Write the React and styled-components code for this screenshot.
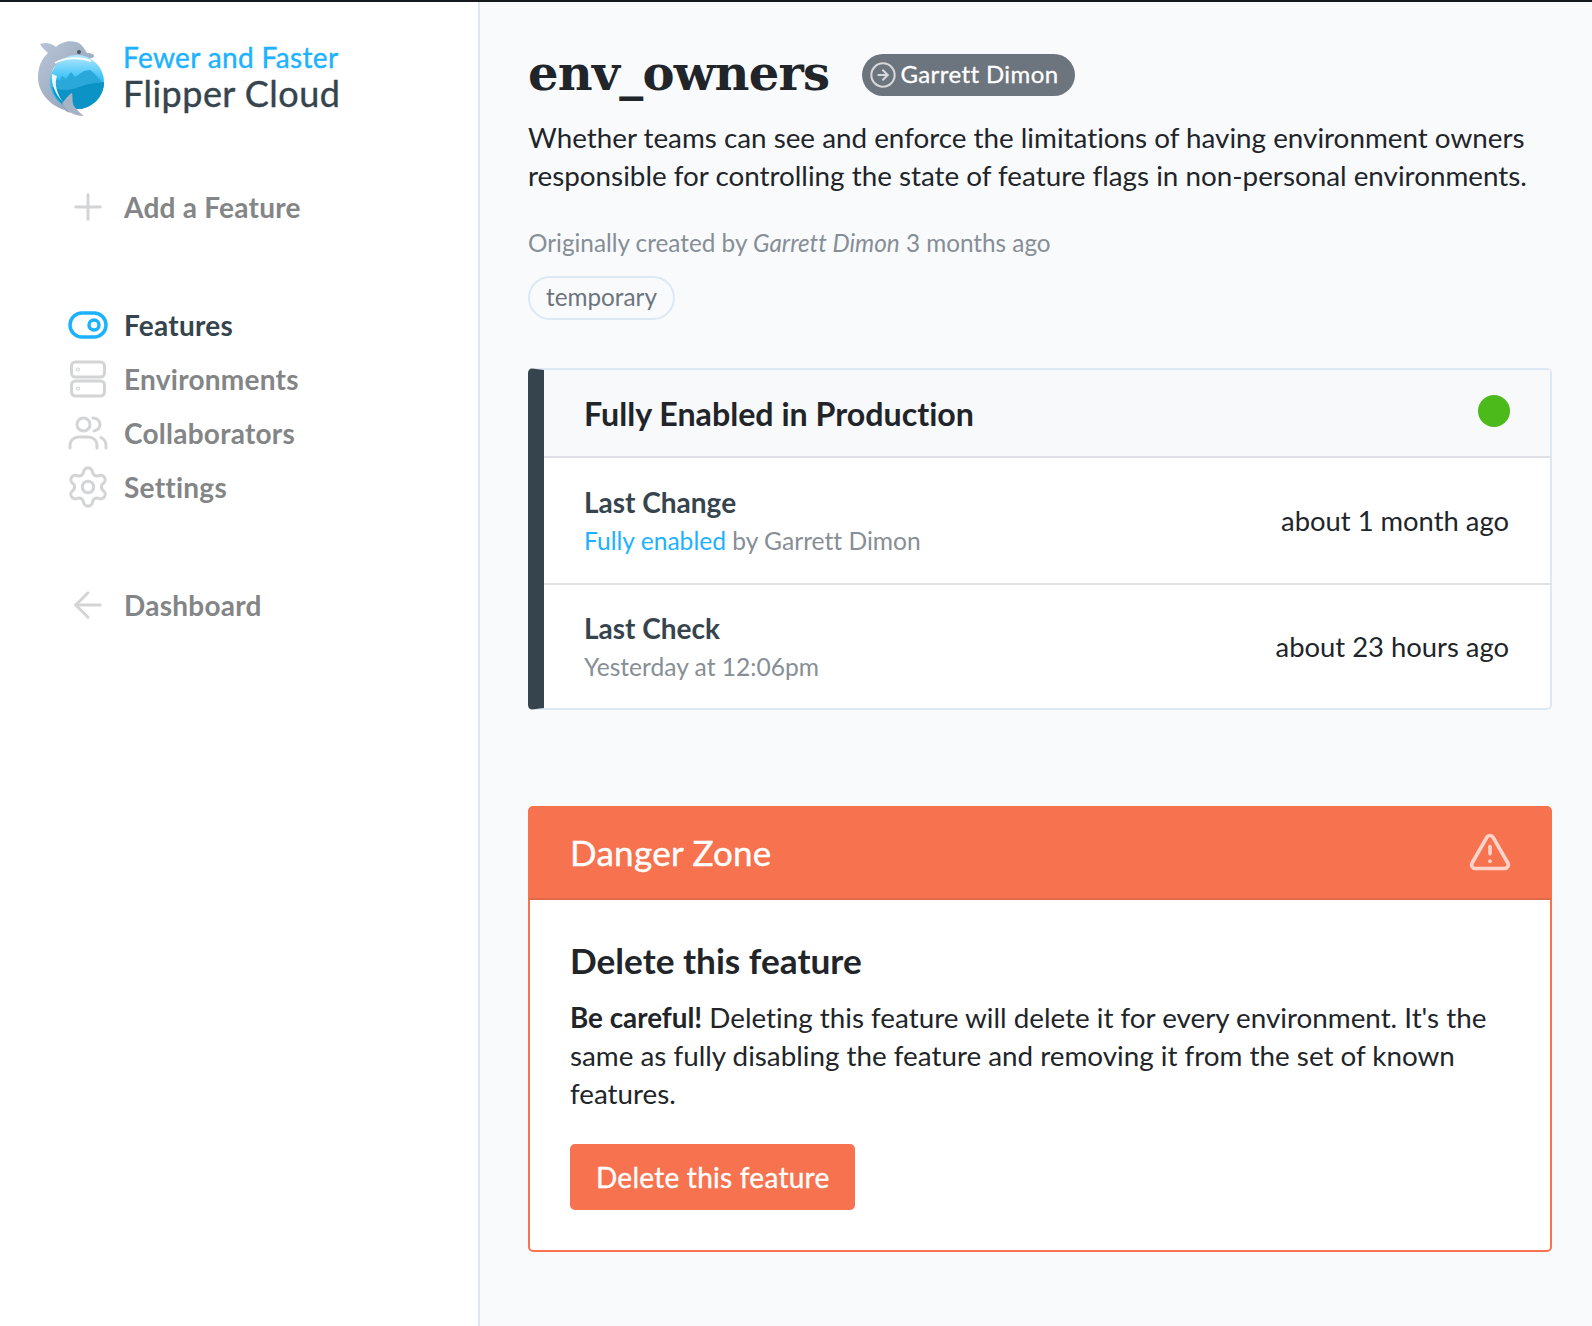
import { createGlobalStyle, styled } from 'styled-components';
import { Plus, Settings, ArrowLeft, ArrowRightCircle, AlertTriangle } from 'lucide-react';

const GlobalStyle = createGlobalStyle`
  html, body { margin: 0; padding: 0; background: #f9fafc; }
  body {
    font-family: Lato, "Liberation Sans", sans-serif;
    font-variant-ligatures: none;
    color: #212529;
  }
  * { box-sizing: border-box; }
`;

const Page = styled.div`
  display: flex;
  height: 1326px;
  overflow: hidden;
  border-top: 2px solid #15191c;
`;

const Sidebar = styled.aside`
  width: 480px;
  flex: none;
  background: #fff;
  border-right: 2px solid #dce8f3;
  padding: 38px 0 0 38px;
`;

const Brand = styled.div`
  display: flex;
  align-items: center;
  gap: 17px;
`;

const BrandText = styled.div`
  display: flex;
  flex-direction: column;
  margin-top: -6px;
  -webkit-text-stroke: 0.4px currentColor;
`;

const Tagline = styled.span`
  color: #1db2ff;
  font-size: 28px;
  line-height: 34px;
  letter-spacing: 0.35px;
`;

const Product = styled.span`
  color: #36444d;
  font-size: 36px;
  line-height: 38px;
  letter-spacing: 0.47px;
`;

const NavGroup = styled.nav`
  display: flex;
  flex-direction: column;
  padding-left: 30px;
  margin-top: ${(p) => p.$top}px;
`;

const NavItem = styled.a`
  display: flex;
  align-items: center;
  gap: 16px;
  height: 54px;
  font-size: 28px;
  font-weight: 700;
  letter-spacing: 0.25px;
  color: ${(p) => (p.$active ? '#36444d' : '#838587')};
`;

const NavIcon = styled.span`
  display: flex;
  width: 40px;
  height: 40px;
  align-items: center;
  justify-content: center;
  color: #d3d4d5;
  svg { flex: none; }
`;

const Main = styled.main`
  flex: 1;
  padding: 39px 40px 0 48px;
`;

const TitleRow = styled.div`
  display: flex;
  align-items: center;
  gap: 33px;
`;

const Title = styled.h1`
  margin: 0;
  font-family: "DejaVu Serif", serif;
  font-size: 48px;
  line-height: 64px;
  font-weight: 700;
  letter-spacing: -0.7px;
  color: #212529;
`;

const OwnerBadge = styled.span`
  display: inline-flex;
  align-items: center;
  gap: 3px;
  height: 42px;
  margin-top: 4px;
  padding: 0 17px 3px 7px;
  border-radius: 21px;
  background: #6c757d;
  color: #fff;
  font-size: 24px;
  letter-spacing: 0.4px;
  -webkit-text-stroke: 0.3px currentColor;
  svg { color: #d6d8da; margin-top: 3px; }
`;

const Description = styled.p`
  margin: 14px 0 0;
  font-size: 27.8px;
  line-height: 38px;
  white-space: nowrap;
`;

const Meta = styled.p`
  margin: 29px 0 0;
  font-size: 24.3px;
  line-height: 38px;
  color: #868e96;
`;

const Tag = styled.span`
  display: inline-flex;
  align-items: center;
  height: 44px;
  margin-top: 14px;
  padding: 0 16px 3px;
  border: 2px solid #dce8f3;
  border-radius: 22px;
  font-size: 24.3px;
  color: #6c757d;
`;

const StatusCard = styled.section`
  margin-top: 48px;
  background: #fff;
  border: 2px solid #dce8f3;
  border-left: 16px solid #36444d;
  border-radius: 5px;
`;

const StatusHeader = styled.div`
  display: flex;
  align-items: center;
  justify-content: space-between;
  height: 88px;
  padding: 0 40px;
  background: #f8f9fb;
  border-bottom: 2px solid #dfe1e4;
`;

const StatusTitle = styled.h2`
  margin: 0;
  font-size: 32.2px;
  font-weight: 700;
  color: #212529;
`;

const StatusDot = styled.span`
  width: 32px;
  height: 32px;
  margin-top: -5px;
  border-radius: 50%;
  background: #4cba1b;
`;

const StatusRow = styled.div`
  display: flex;
  align-items: center;
  justify-content: space-between;
  height: 125px;
  padding: 0 41px 0 40px;
  border-top: ${(p) => (p.$first ? 'none' : '2px solid #dfe1e4')};
`;

const RowText = styled.div`
  padding-top: 2px;
`;

const RowLabel = styled.div`
  font-size: 28px;
  line-height: 38px;
  font-weight: 700;
  color: #36444d;
`;

const RowDetail = styled.div`
  font-size: 24.6px;
  line-height: 40px;
  color: #868e96;
`;

const RowLink = styled.a`
  color: #1db2ff;
`;

const RowTime = styled.div`
  font-size: 27.4px;
  color: #212529;
`;

const DangerCard = styled.section`
  margin-top: 96px;
  background: #fff;
  border: 2px solid #f7724e;
  border-radius: 5px;
`;

const DangerHeader = styled.div`
  display: flex;
  align-items: center;
  justify-content: space-between;
  height: 93px;
  margin: -1px -1px 0;
  padding: 0 39px 0 41px;
  background: #f7724e;
  border-bottom: 2px solid #e06a49;
  border-radius: 5px 5px 0 0;
  color: #fff;
  svg { color: #fdd4c9; margin-bottom: 2px; }
`;

const DangerTitle = styled.h2`
  margin: 0 0 2px;
  font-size: 35px;
  font-weight: 400;
  letter-spacing: 0.28px;
  -webkit-text-stroke: 0.4px currentColor;
`;

const DangerBody = styled.div`
  padding: 38px 40px 40px;
`;

const DangerHeading = styled.h3`
  margin: 0;
  font-size: 35.2px;
  line-height: 44px;
  font-weight: 700;
  color: #212529;
`;

const DangerText = styled.p`
  margin: 17px 0 0;
  font-size: 27.8px;
  line-height: 38px;
`;

const DangerButton = styled.button`
  display: block;
  margin-top: 31px;
  height: 66px;
  padding: 0 26px;
  border: none;
  border-radius: 5px;
  background: #f7724e;
  color: #fff;
  font-family: inherit;
  font-size: 28px;
  letter-spacing: 0.25px;
  -webkit-text-stroke: 0.35px currentColor;
`;

function Dolphin() {
  return (
    <svg width="68" height="78" viewBox="0 0 68 78">
      <defs>
        <linearGradient id="dolphinBody" x1="0" y1="0" x2="1" y2="1">
          <stop offset="0" stopColor="#b9c6d8" />
          <stop offset="1" stopColor="#8d9cb3" />
        </linearGradient>
        <linearGradient id="bowl" x1="0" y1="0" x2="0" y2="1">
          <stop offset="0" stopColor="#b5e9ff" />
          <stop offset="0.45" stopColor="#36c0f6" />
          <stop offset="1" stopColor="#27b0ea" />
        </linearGradient>
      </defs>
      <path d="M2 4 C8 2 13 3 18 7 C22 3 30 0 38 2 C43 3 46 8 49 13 C53 13 56 14 56 16 C56 18 52 19 47 19 C34 19 17 20 14 32 C11 46 18 58 31 65 L36 71 C34 72 30 74 27 70 C12 66 0 52 0 38 C0 28 3 19 10 13 C7 10 4 8 2 4 Z" fill="url(#dolphinBody)" />
      <circle cx="39" cy="42" r="27" fill="url(#bowl)" />
      <path d="M15 47 C18 38 20 38 22 41 L24 36 L28 39 L33 32 L37 37 L46 31 L52 30 C56 32 60 38 66 44 A27 27 0 0 1 39 69 C28 69 18 60 15 47 Z" fill="#2aa8da" />
      <path d="M14 47 C24 52 34 50 44 46 C52 43 60 43 66 42 A27 27 0 0 1 39 69 C27 69 17 60 14 47 Z" fill="#0a93c4" />
      <path d="M17 23 C27 17 43 17 53 21" fill="none" stroke="#fff" strokeWidth="2" opacity="0.9" />
      <path d="M14 34 C13 44 17 54 25 62 C19 54 16 44 19 36 Z" fill="#fff" opacity="0.9" />
      <path d="M24 63 C28 59 31 54 34 53 C35 58 34 63 36 66 C39 70 43 74 46 76 C40 76 34 74 30 71 Z" fill="#a6b3c6" />
      <circle cx="41" cy="12" r="2" fill="#4a5560" />
    </svg>
  );
}

function ToggleIcon() {
  return (
    <svg width="40" height="28" viewBox="0 0 40 28" fill="none" stroke="#1db2ff" strokeWidth="3.5">
      <rect x="2" y="2" width="36" height="24" rx="12" />
      <circle cx="26" cy="14" r="5" />
    </svg>
  );
}

function ServerIcon() {
  return (
    <svg width="38" height="38" viewBox="0 0 38 38" fill="none" stroke="currentColor" strokeWidth="3">
      <rect x="2.5" y="2" width="33" height="15" rx="4" />
      <rect x="2.5" y="21" width="33" height="15" rx="4" />
      <circle cx="9" cy="9.5" r="0.6" />
      <circle cx="9" cy="28.5" r="0.6" />
    </svg>
  );
}

function PeopleIcon() {
  return (
    <svg width="40" height="34" viewBox="0 0 40 34" fill="none" stroke="currentColor" strokeWidth="3" strokeLinecap="round">
      <circle cx="15.5" cy="8.5" r="6.5" />
      <path d="M25 2 C30 2.5 32 5.5 32 8.5 C32 11.5 30 14 26 15" />
      <path d="M2 32 V30 C2 24 6 21 11 21 H20 C25 21 29 24 29 30 V32" />
      <path d="M33 21.5 C36 23 38 26 38 30 V32" />
    </svg>
  );
}

const NAV = [
  { label: 'Features', icon: <ToggleIcon />, active: true },
  { label: 'Environments', icon: <ServerIcon /> },
  { label: 'Collaborators', icon: <PeopleIcon /> },
  { label: 'Settings', icon: <Settings size={46} strokeWidth={1.6} /> },
];

export default function App() {
  return (
    <>
      <GlobalStyle />
      <Page>
        <Sidebar>
          <Brand>
            <Dolphin />
            <BrandText>
              <Tagline>Fewer and Faster</Tagline>
              <Product>Flipper Cloud</Product>
            </BrandText>
          </Brand>
          <NavGroup $top={62}>
            <NavItem>
              <NavIcon><Plus size={42} strokeWidth={1.7} /></NavIcon>
              Add a Feature
            </NavItem>
          </NavGroup>
          <NavGroup $top={64}>
            {NAV.map((item) => (
              <NavItem key={item.label} $active={item.active}>
                <NavIcon>{item.icon}</NavIcon>
                {item.label}
              </NavItem>
            ))}
          </NavGroup>
          <NavGroup $top={64}>
            <NavItem>
              <NavIcon><ArrowLeft size={42} strokeWidth={1.7} /></NavIcon>
              Dashboard
            </NavItem>
          </NavGroup>
        </Sidebar>
        <Main>
          <TitleRow>
            <Title>env_owners</Title>
            <OwnerBadge>
              <ArrowRightCircle size={28} strokeWidth={1.75} />
              Garrett Dimon
            </OwnerBadge>
          </TitleRow>
          <Description>
            Whether teams can see and enforce the limitations of having environment owners<br />
            responsible for controlling the state of feature flags in non-personal environments.
          </Description>
          <Meta>
            Originally created by <em>Garrett Dimon</em> 3 months ago
          </Meta>
          <Tag>temporary</Tag>
          <StatusCard>
            <StatusHeader>
              <StatusTitle>Fully Enabled in Production</StatusTitle>
              <StatusDot />
            </StatusHeader>
            <StatusRow $first>
              <RowText>
                <RowLabel>Last Change</RowLabel>
                <RowDetail><RowLink>Fully enabled</RowLink> by Garrett Dimon</RowDetail>
              </RowText>
              <RowTime>about 1 month ago</RowTime>
            </StatusRow>
            <StatusRow>
              <RowText>
                <RowLabel>Last Check</RowLabel>
                <RowDetail>Yesterday at 12:06pm</RowDetail>
              </RowText>
              <RowTime>about 23 hours ago</RowTime>
            </StatusRow>
          </StatusCard>
          <DangerCard>
            <DangerHeader>
              <DangerTitle>Danger Zone</DangerTitle>
              <AlertTriangle size={44} strokeWidth={2} />
            </DangerHeader>
            <DangerBody>
              <DangerHeading>Delete this feature</DangerHeading>
              <DangerText>
                <strong>Be careful!</strong> Deleting this feature will delete it for every environment. It's the same as fully disabling the feature and removing it from the set of known features.
              </DangerText>
              <DangerButton>Delete this feature</DangerButton>
            </DangerBody>
          </DangerCard>
        </Main>
      </Page>
    </>
  );
}
